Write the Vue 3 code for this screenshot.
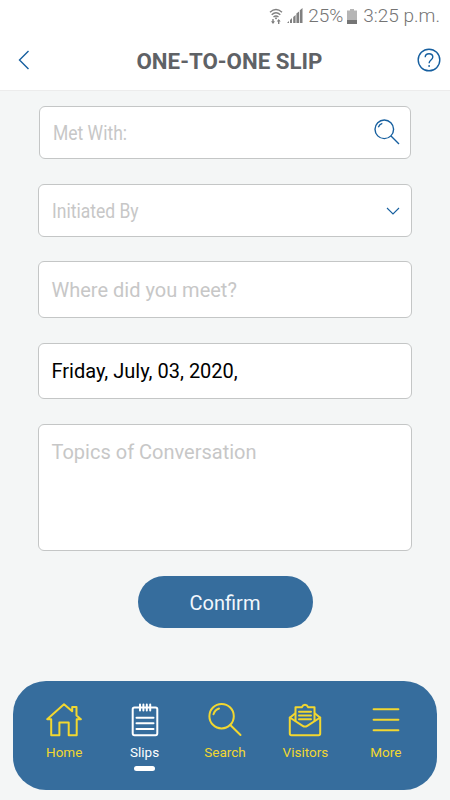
<template>
  <div class="screen">
    <!-- status bar -->
    <div class="status-bar">
      <svg class="wifi" viewBox="0 0 14 17" fill="none" stroke="#808080" stroke-width="1.4">
        <path d="M1 4.2Q7-1.2 13 4.2M2.7 6.7Q7 2.8 11.3 6.7M4.5 9Q7 6.8 9.5 9" />
        <path d="M7 9l1.2 1.2L7 11.4l-1.2-1.2z" fill="#808080" stroke="none" />
        <path d="M4 11v4M9.7 16v-4" />
        <path d="M2 13.3h4l-2 2.6zM7.7 13.5h4l-2-2.6z" fill="#808080" stroke="none" />
      </svg>
      <svg class="signal" viewBox="0 0 16 16" fill="#808080">
        <path d="M0 15l2-2v2zM3 12l2-2v5H3zM6.2 9l2.4-2v8H6.2zM9.4 5.5l2.6-2V15H9.4zM12.8 2.3L15.5 0v15h-2.7z" />
      </svg>
      <span class="percent">25%</span>
      <svg class="battery" viewBox="0 0 10 15">
        <path d="M3 0h4v1.5h3v9.5H0V1.5h3z" fill="#b5b5b5" />
        <path d="M0 11h10v4H0z" fill="#757575" />
      </svg>
      <span class="time">3:25 p.m.</span>
    </div>

    <!-- header -->
    <header class="header">
      <button class="icon-btn" aria-label="Back">
        <svg class="back" viewBox="0 0 12 20"><path d="M10.5 1L1.5 10l9 9" /></svg>
      </button>
      <h1>ONE-TO-ONE SLIP</h1>
      <button class="icon-btn" aria-label="Help">
        <svg class="help" viewBox="0 0 24 24">
          <circle cx="12" cy="12" r="10.8" />
          <path d="M8.2 9.2C8.3 6.9 9.9 5.7 12 5.7c2.2 0 3.8 1.3 3.8 3.3 0 2.9-3.6 3-3.6 5.8v.5" />
          <circle cx="12.1" cy="18" r=".9" class="dot" />
        </svg>
      </button>
    </header>

    <!-- form -->
    <main class="form">
      <div class="field met-with">
        <span class="placeholder narrow">Met With:</span>
        <svg class="search" viewBox="0 0 26 26">
          <circle cx="10.3" cy="10.3" r="9.3" />
          <path d="M17 17l8 8M4.3 8.2q1.2-3 4-3.8" />
        </svg>
      </div>
      <div class="field initiated">
        <span class="placeholder narrow">Initiated By</span>
        <svg class="chevron" viewBox="0 0 14 8"><path d="M1 1l6 6 6-6" /></svg>
      </div>
      <div class="field where">
        <span class="placeholder">Where did you meet?</span>
      </div>
      <div class="field date">
        <span>{{ meetingDate }}</span>
      </div>
      <div class="field topics">
        <span class="placeholder">Topics of Conversation</span>
      </div>
      <button class="confirm">Confirm</button>
    </main>

    <!-- bottom navigation -->
    <nav class="tab-bar">
      <button
        v-for="tab in tabs"
        :key="tab.name"
        class="tab"
        :class="{ active: tab.name === activeTab }"
        @click="activeTab = tab.name"
      >
        <svg class="tab-icon" viewBox="0 0 36 34">
          <path v-for="(d, i) in tab.paths" :key="i" :d="d" />
        </svg>
        <span class="tab-label">{{ tab.name }}</span>
        <span v-if="tab.name === activeTab" class="indicator"></span>
      </button>
    </nav>
  </div>
</template>

<script setup>
import { ref } from 'vue';

const meetingDate = ref('Friday, July, 03, 2020,');
const activeTab = ref('Slips');

const tabs = [
  {
    name: 'Home',
    paths: [
      'M18 1.2L1.2 16.2h4V32.2h8.2V19.5h9.3v12.7h8V16.2h4.2L30.5 12.5V4h-4.3v4.3z',
    ],
  },
  {
    name: 'Slips',
    paths: [
      'M7.5 4.5Q5.7 4.5 5.7 6.3v24Q5.7 32.2 7.5 32.2h21Q30.3 32.2 30.3 30.3v-24Q30.3 4.5 28.5 4.5z',
      'M13 1.5v6M16.4 1.5v6M19.8 1.5v6M23.2 1.5v6',
      'M9.5 14.7h17M9.5 20.2h17M9.5 26h17',
    ],
  },
  {
    name: 'Search',
    paths: [
      'M26.8 13.2a12.2 12.2 0 1 1-24.4 0a12.2 12.2 0 1 1 24.4 0z',
      'M23.3 22L33.5 32',
      'M6.5 11.2Q8 6.8 12 5.5',
    ],
  },
  {
    name: 'Visitors',
    paths: [
      'M8 10.5L2.8 14.7V30.5Q2.8 32.2 4.5 32.2h27Q33.2 32.2 33.2 30.5V14.7L28 10.5',
      'M2.8 14.5L15.7 22.8q2.3 1.5 4.6 0L33.2 14.5',
      'M8.5 17.8V4.2h6.3Q16 1.8 18 1.8T21.2 4.2h6.3v13.6',
      'M12 8.8h12M12 12.5h12M12 16.2h12',
    ],
  },
  {
    name: 'More',
    paths: ['M5.6 6.3h24.8M5.6 16.8h24.8M5.6 27.2h24.8'],
  },
];
</script>

<style>
body {
  background: #f4f6f6;
}
</style>

<style scoped>
.screen {
  width: 450px;
  height: 800px;
  display: flex;
  flex-direction: column;
  overflow: hidden;
  background: #f4f6f6;
  font-family: Roboto, 'Liberation Sans', sans-serif;
}

button {
  padding: 0;
  border: none;
  background: none;
  font-family: inherit;
  cursor: pointer;
}

svg {
  display: block;
  flex: none;
}

.status-bar {
  box-sizing: border-box;
  height: 31px;
  padding: 1px 10px 0 0;
  display: flex;
  align-items: center;
  justify-content: flex-end;
  background: #fff;
  color: #747474;
  font-size: 19px;
  font-weight: 350;
  line-height: 30px;
  white-space: nowrap;
}

.wifi {
  width: 14px;
  height: 17px;
}

.signal {
  width: 16px;
  height: 16px;
  margin: 0 5px 0 4px;
}

.battery {
  width: 10px;
  height: 15px;
  margin: 0 6px 0 4px;
}

.header {
  height: 59px;
  padding: 0 9px 0 18px;
  display: flex;
  align-items: center;
  justify-content: space-between;
  background: #fff;
  border-bottom: 1px solid #ececec;
}

.header h1 {
  margin: 1px 0 0 12px;
  color: #5f6266;
  font-size: 22.3px;
  font-weight: 700;
}

.icon-btn {
  margin-bottom: 1px;
}

.back,
.help,
.search,
.chevron {
  fill: none;
  stroke: #165f9f;
  stroke-width: 1.4;
}

.back {
  width: 12px;
  height: 20px;
}

.help {
  width: 24px;
  height: 24px;
}

.help .dot {
  fill: #165f9f;
  stroke: none;
}

.form {
  padding: 15px 38px 0;
  display: flex;
  flex-direction: column;
}

.field {
  box-sizing: border-box;
  padding: 0 12.5px;
  display: flex;
  align-items: center;
  justify-content: space-between;
  border: 1px solid #c4c6c6;
  border-radius: 6px;
  background: #fff;
  color: #000;
  font-size: 20px;
  white-space: nowrap;
}

.placeholder {
  color: #c7c7c7;
}

.narrow {
  transform: scaleX(0.875);
  transform-origin: left center;
}

.met-with {
  height: 53px;
  margin: 0 1px 25px;
  padding-right: 10.5px;
}

.initiated {
  height: 53px;
  margin-bottom: 24px;
  padding-right: 11.5px;
}

.where {
  height: 57px;
  margin-bottom: 25px;
}

.date {
  height: 56px;
  margin-bottom: 25px;
}

.topics {
  height: 127px;
  padding-top: 15px;
  align-items: flex-start;
}

.search {
  width: 26px;
  height: 26px;
  margin-top: -2px;
}

.chevron {
  width: 14px;
  height: 8px;
  stroke-width: 1.1;
}

.confirm {
  align-self: center;
  width: 175px;
  height: 52px;
  margin-top: 25px;
  padding-top: 2px;
  border-radius: 26px;
  background: #366d9d;
  color: #f2f7fc;
  font-size: 20px;
}

.tab-bar {
  box-sizing: border-box;
  height: 109px;
  margin: auto 13px 10px;
  padding: 22px 11px 0;
  display: grid;
  grid-template-columns: repeat(5, 1fr);
  border-radius: 33px;
  background: #366d9d;
}

.tab {
  display: flex;
  flex-direction: column;
  align-items: center;
  color: #f2d730;
}

.tab.active {
  color: #fff;
}

.tab-icon {
  width: 36px;
  height: 34px;
  fill: none;
  stroke: currentColor;
  stroke-width: 2;
  stroke-linecap: round;
  stroke-linejoin: round;
}

.tab-label {
  margin-top: 7px;
  font-size: 13.5px;
  line-height: 16px;
}

.indicator {
  width: 21px;
  height: 5px;
  margin-top: 6px;
  border-radius: 3px;
  background: #fff;
}
</style>
